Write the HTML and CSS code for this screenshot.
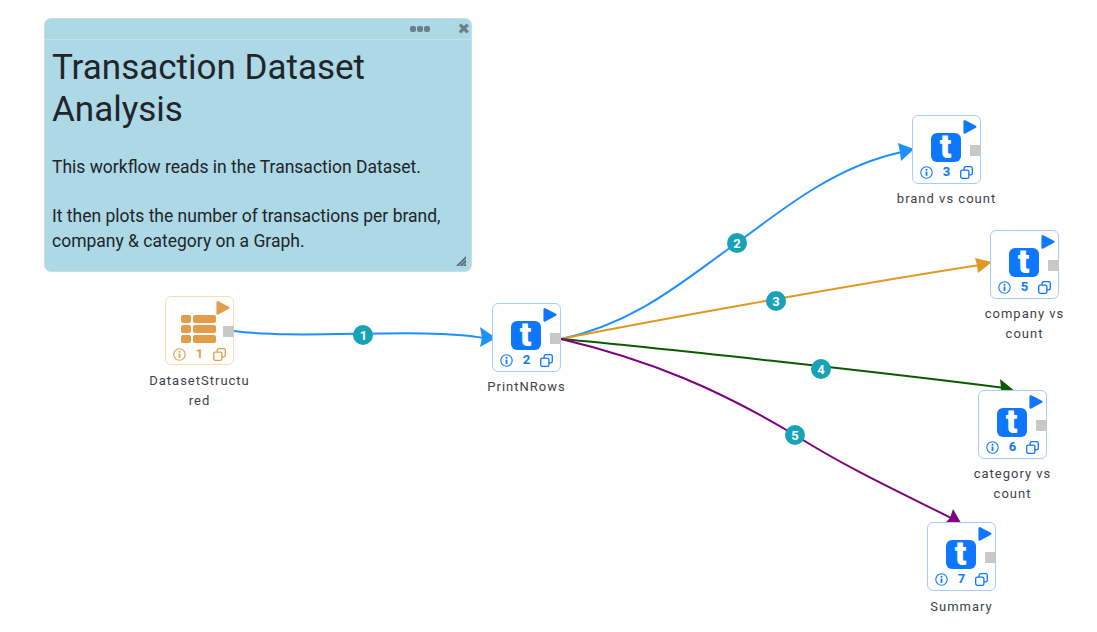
FILE: index.html
```html
<!DOCTYPE html>
<html lang="en">
  <head>
    <meta charset="UTF-8">
    <title>Transaction Dataset Analysis</title>
    <link rel="stylesheet" href="styles.css">
  </head>
  <body>
    <svg width="0" height="0" class="defs">
      <symbol id="play" viewBox="0 0 15 16">
        <path d="M2.5 0.8 L13.8 6.6 Q15.2 7.6 13.8 8.8 L2.5 15 Q0.5 15.8 0.5 13.5 V2.5 Q0.5 0 2.5 0.8Z"/>
      </symbol>
      <symbol id="info" viewBox="0 0 13 13">
        <circle cx="6.5" cy="6.5" r="5.7" fill="none" stroke="currentColor" stroke-width="1.1"/>
        <circle cx="6.5" cy="3.8" r="1" fill="currentColor"/>
        <rect x="5.6" y="5.6" width="1.8" height="4.2" fill="currentColor"/>
      </symbol>
      <symbol id="copy" viewBox="0 0 13 13">
        <rect x="4.1" y="0.7" width="8.2" height="8.2" rx="1.6" fill="none" stroke="currentColor" stroke-width="1.3"/>
        <rect x="0.7" y="4.1" width="8.2" height="8.2" rx="1.6" fill="#fff" stroke="currentColor" stroke-width="1.3"/>
      </symbol>
    </svg>

    <div id="canvas">
      <svg id="edges" width="1097" height="632">
        <path d="M234 331 C300 340 420 327 484 338" stroke="#1e90ff"/>
        <polygon points="496,338 480,327 482,338 480,347" fill="#1e90ff"/>

        <path d="M561 339 C640 322 690 275 737 243 C790 203 840 165 902 152" stroke="#1e90ff"/>
        <polygon points="914,149 898,143 900,152 901,161" fill="#1e90ff"/>

        <path d="M561 339 C640 323 850 285 980 265" stroke="#e09a22"/>
        <polygon points="992,262 975,258 977,265 978,273" fill="#e09a22"/>

        <path d="M561 339 C650 347 880 372 1005 388" stroke="#0b5a00"/>
        <polygon points="1016,392 1000,379 1001,388 1000,397" fill="#0b5a00"/>

        <path d="M561 339 C650 360 720 390 795 435 C850 470 910 497 955 520" stroke="#800080"/>
        <polygon points="964,528 953,509 950,518 944,524" fill="#800080"/>

        <g class="badge">
          <circle cx="363" cy="335" r="10"/><text x="363.5" y="339.5">1</text>
          <circle cx="737" cy="243" r="10"/><text x="737" y="247.5">2</text>
          <circle cx="776" cy="301" r="10"/><text x="776" y="305.5">3</text>
          <circle cx="821" cy="369" r="10"/><text x="821" y="373.5">4</text>
          <circle cx="795" cy="435" r="10"/><text x="795" y="439.5">5</text>
        </g>
      </svg>

      <div class="note">
        <div class="note-head">
          <span class="dots"><i></i><i></i><i></i></span>
          <span class="close">✖</span>
        </div>
        <div class="note-body">
          <h1>Transaction Dataset Analysis</h1>
          <p>This workflow reads in the Transaction Dataset.</p>
          <p>It then plots the number of transactions per brand, company &amp; category on a Graph.</p>
        </div>
        <svg class="grip" width="12" height="12" viewBox="0 0 12 12">
          <path d="M11 1 L1 11 H11Z" fill="#5f6b73"/>
          <path d="M4 11 L11 4 M7.5 11 L11 7.5" stroke="#add8e6" stroke-width="0.8"/>
        </svg>
      </div>

      <div class="node data n1">
        <svg class="play"><use href="#play"/></svg>
        <div class="icon-table"><i></i><i></i><i></i><i></i><i></i><i></i></div>
        <div class="node-foot">
          <svg><use href="#info"/></svg><b>1</b><svg><use href="#copy"/></svg>
        </div>
        <span class="port"></span>
        <div class="label">DatasetStructured</div>
      </div>

      <div class="node n2">
        <svg class="play"><use href="#play"/></svg>
        <div class="icon-t">t</div>
        <div class="node-foot">
          <svg><use href="#info"/></svg><b>2</b><svg><use href="#copy"/></svg>
        </div>
        <span class="port"></span>
        <div class="label">PrintNRows</div>
      </div>

      <div class="node n3">
        <svg class="play"><use href="#play"/></svg>
        <div class="icon-t">t</div>
        <div class="node-foot">
          <svg><use href="#info"/></svg><b>3</b><svg><use href="#copy"/></svg>
        </div>
        <span class="port"></span>
        <div class="label">brand vs count</div>
      </div>

      <div class="node n5">
        <svg class="play"><use href="#play"/></svg>
        <div class="icon-t">t</div>
        <div class="node-foot">
          <svg><use href="#info"/></svg><b>5</b><svg><use href="#copy"/></svg>
        </div>
        <span class="port"></span>
        <div class="label">company vs count</div>
      </div>

      <div class="node n6">
        <svg class="play"><use href="#play"/></svg>
        <div class="icon-t">t</div>
        <div class="node-foot">
          <svg><use href="#info"/></svg><b>6</b><svg><use href="#copy"/></svg>
        </div>
        <span class="port"></span>
        <div class="label">category vs count</div>
      </div>

      <div class="node n7">
        <svg class="play"><use href="#play"/></svg>
        <div class="icon-t">t</div>
        <div class="node-foot">
          <svg><use href="#info"/></svg><b>7</b><svg><use href="#copy"/></svg>
        </div>
        <span class="port"></span>
        <div class="label">Summary</div>
      </div>
    </div>
  </body>
</html>
```

FILE: styles.css
```css
html, body {
  margin: 0;
  padding: 0;
  background: #fff;
  font-family: Roboto, "Liberation Sans", sans-serif;
  color: #212529;
  overflow: hidden;
}

.defs {
  position: absolute;
}

#canvas {
  position: relative;
  width: 1097px;
  height: 632px;
  overflow: hidden;
}

#edges {
  position: absolute;
  left: 0;
  top: 0;
}

#edges path {
  fill: none;
  stroke-width: 2;
}

.badge circle {
  fill: #17a2b8;
}

.badge text {
  fill: #fff;
  font-size: 13px;
  font-weight: 700;
  text-anchor: middle;
}

/* sticky note */
.note {
  position: absolute;
  left: 44px;
  top: 18px;
  width: 426px;
  height: 252px;
  background: #add8e6;
  border: 1px solid #c5dfe8;
  border-radius: 7px;
}

.note-head {
  display: flex;
  justify-content: flex-end;
  align-items: center;
  height: 20px;
  padding-right: 1px;
  border-bottom: 1px solid #c3e1ec;
  color: #6c7f88;
}

.dots {
  display: flex;
  gap: 1px;
  margin-right: 27px;
}

.dots i {
  width: 6px;
  height: 6px;
  border-radius: 2px;
  background: #6c7f88;
}

.close {
  font-size: 15px;
  line-height: 14px;
  font-family: "DejaVu Sans", sans-serif;
}

.note-body {
  padding: 7px 7px 0;
}

.note-body h1 {
  margin: 0 0 24px;
  font-size: 35px;
  line-height: 42px;
  font-weight: 400;
}

.note-body p {
  margin: 0 0 24px;
  font-size: 17.5px;
  line-height: 25px;
  font-weight: 400;
}

.grip {
  position: absolute;
  right: 4px;
  bottom: 4px;
}

/* workflow nodes */
.node {
  position: absolute;
  box-sizing: border-box;
  width: 69px;
  height: 69px;
  padding-top: 17px;
  display: flex;
  flex-direction: column;
  align-items: center;
  background: #fff;
  border: 1px solid #a3cdff;
  border-radius: 6px;
  color: #0d77ff;
}

.node.data {
  border-color: #fbdcb4;
  color: #e39d4a;
}

.n1 { left: 165px; top: 296px; }
.n2 { left: 492px; top: 303px; }
.n3 { left: 912px; top: 115px; }
.n5 { left: 990px; top: 230px; }
.n6 { left: 978px; top: 390px; }
.n7 { left: 927px; top: 522px; }

.play {
  position: absolute;
  right: 3px;
  top: 3px;
  width: 14px;
  height: 16px;
  fill: currentColor;
}

.port {
  position: absolute;
  right: -1px;
  top: 29px;
  width: 11px;
  height: 11px;
  background: #c8c8c8;
}

.icon-t {
  width: 30px;
  height: 29px;
  margin-right: 2px;
  border-radius: 6px;
  background: #0d77ff;
  color: #fff;
  font-size: 34px;
  line-height: 27px;
  font-weight: 900;
  text-align: center;
}

.icon-table {
  display: grid;
  grid-template-columns: 10px 23px;
  grid-auto-rows: 8px;
  gap: 2px;
  width: 35px;
  height: 29px;
  margin: 1px 2px 0 0;
}

.icon-table i {
  background: currentColor;
  border-radius: 2px;
}

.node-foot {
  display: flex;
  justify-content: space-between;
  align-items: center;
  box-sizing: border-box;
  width: 100%;
  margin-top: 3px;
  padding: 0 7px;
  font-size: 13px;
}

.node-foot svg {
  width: 13px;
  height: 13px;
}

.node-foot b {
  font-weight: 700;
  line-height: 14px;
}

.label {
  position: absolute;
  left: -17px;
  top: 73px;
  width: 101px;
  color: #3d4349;
  font-size: 13px;
  line-height: 20px;
  letter-spacing: 1px;
  text-align: center;
  overflow-wrap: break-word;
}

.n1 .label, .n7 .label {
  top: 74px;
}
```
